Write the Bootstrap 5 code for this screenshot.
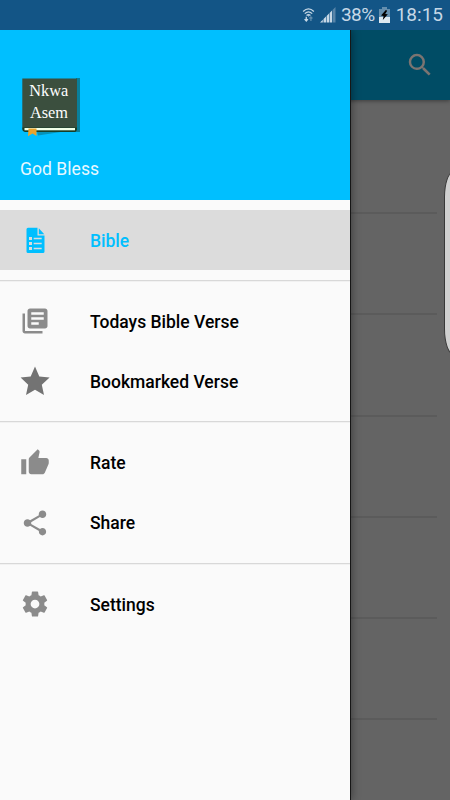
<!DOCTYPE html>
<html lang="en">
<head>
<meta charset="utf-8">
<meta name="viewport" content="width=device-width, initial-scale=1">
<title>Nkwa Asem</title>
<link href="https://cdn.jsdelivr.net/npm/bootstrap@5.3.0/dist/css/bootstrap.min.css" rel="stylesheet">
<style>
body{font-family:Roboto,sans-serif;font-size:17.5px;background:#646464}
.screen{width:450px;height:800px}
.statusbar{height:30px;background:#135586;color:#c6d8e6;font-size:19px;padding-right:7px;z-index:3}
.sig{margin-left:5px}
.pct{margin-left:5px;letter-spacing:-.5px}
.batt{margin-left:4px}
.clock{margin-left:6px}
.appbar{height:70px;background:#004c65;box-shadow:0 1px 4px rgba(0,0,0,.4);padding-right:15px}
.verse-row{height:101.3px;border-bottom:2px solid #5b5b5b;margin-right:13px}
.verse-row:first-child{height:114px}
.drawer{left:0;top:30px;width:350px;height:770px;background:#fafafa;box-shadow:1px 0 0 #161616,2px 0 8px rgba(0,0,0,.38)}
.drawer-head{height:170px;background:#00bfff;padding:48px 20px 0;color:#e9f8ff}
.drawer-name{margin-top:14px;line-height:26px;letter-spacing:.05px}
.drawer-menu{padding-top:10px}
.drawer-item{height:60px;padding-left:20px;gap:40px;font-weight:500;color:#000;text-decoration:none}
.drawer-item span{padding-top:2px}
.drawer-item svg{color:#8b8b8b}
.drawer-item.current{background:#dcdcdc;color:#00bfff}
.drawer-item.current svg{color:#00bfff}
.group-gap{height:21.3px;padding-top:10px}
.group-gap svg{display:block;width:350px;height:3px}
.edge-panel{left:444px;top:171px;width:20px;height:184px;background:#d0d0d0;border:1px solid #393939;border-radius:10px/26px}
</style>
<script src="https://cdn.jsdelivr.net/npm/bootstrap@5.3.0/dist/js/bootstrap.bundle.min.js"></script>
</head>
<body>
<div class="screen position-relative overflow-hidden">
  <header class="statusbar position-relative d-flex align-items-center justify-content-end">
    <svg width="13" height="18" viewBox="0 0 14 18" fill="none" stroke="#c6d8e6" stroke-width="1.4"><path d="M1.200 5.200Q7-.5 12.800 5.200M3 7.500Q7 3.700 11 7.500M4.900 9.600Q7 7.600 9.100 9.600"/><path d="M5.800 9.200h2.400L7 10.800z" fill="#c6d8e6" stroke="none"/><path d="M4.600 11v4.500M2.800 13.500l1.800 2 1.800-2"/><path d="M9.600 15.500v-4.500M8 12.800l1.600-1.800 1.600 1.800" stroke="#5f8cae"/></svg>
    <svg class="sig" width="16" height="16" viewBox="0 0 16 16" fill="#c6d8e6"><path d="M0 15.500L2.800 12.700v2.800zM3.500 15.500v-3.500L6 9.500v6zM6.600 15.500V8.900L9 6.500v9zM9.600 15.500V5.900L12 3.500v12z"/><path d="M12.500 15.500V3L15.500 0v15.500z" fill="#5784a8"/></svg>
    <span class="pct">38%</span>
    <svg class="batt" width="11" height="16" viewBox="0 0 11 16"><path d="M3 0h5v2h3v9H0V2h3z" fill="#658fae"/><path d="M0 10h11v6H0z" fill="#dce8f0"/><path d="M6.800 3L2 8.600l2.600.500L3.800 13l5-5.700-2.600-.4 2-3.200z" fill="#000"/></svg>
    <span class="clock">18:15</span>
  </header>
  <div class="appbar position-relative d-flex align-items-center justify-content-end">
    <svg width="30" height="30" viewBox="0 0 24 24" fill="#7b7471"><path d="M15.500 14h-.79l-.28-.27A6.471 6.471 0 0 0 16 9.500 6.500 6.500 0 1 0 9.500 16c1.610 0 3.090-.59 4.230-1.570l.27.28v.79l5 4.990L20.490 19l-4.990-5zm-6 0C7.010 14 5 11.990 5 9.500S7.010 5 9.500 5 14 7.010 14 9.500 11.990 14 9.500 14z"/></svg>
  </div>
  <main>
    <div class="verse-row"></div><div class="verse-row"></div><div class="verse-row"></div><div class="verse-row"></div><div class="verse-row"></div><div class="verse-row"></div>
  </main>
  <aside class="drawer position-absolute">
    <div class="drawer-head">
      <svg class="d-block" width="62" height="64" viewBox="0 0 62 64">
        <path d="M56 0h4v54h-4z" fill="#087f9a"/>
        <path d="M17 53.500h27l-26 4z" fill="#0593ba"/>
        <path d="M2.300 .500H57V50.500L56 53.500H5Q2.300 53.500 2.300 51z" fill="#3b4f3e"/>
        <path d="M2.500 49.500h54.500v2l-1.500 2.500H5Q2.500 53.500 2.500 51z" fill="#173e28"/>
        <rect x="4.500" y="50" width="50.500" height="2.300" fill="#f0ffe8"/>
        <path d="M8.500 50.500h8v7.500l-4-2.600-4.500 2.800z" fill="#e9a32d"/>
        <g fill="#fff" font-family="Liberation Serif,serif" font-size="17" text-anchor="middle"><text x="28.700" y="18" textLength="39" lengthAdjust="spacingAndGlyphs">Nkwa</text><text x="29" y="40.200" textLength="38" lengthAdjust="spacingAndGlyphs">Asem</text></g>
      </svg>
      <div class="drawer-name">God Bless</div>
    </div>
    <nav class="drawer-menu d-flex flex-column">
      <a class="drawer-item current d-flex align-items-center" href="#"><svg width="30" height="30" viewBox="0.5 0 30 30" fill="currentColor"><path fill-rule="evenodd" d="M8.500 2.700H18V10.500h7v16q0 1.500-1.500 1.500h-15Q7 28 7 26.500V4.200q0-1.500 1.500-1.500zM9.500 12v3h3v-3zM9.500 17v3h3v-3zM9.500 22v3h3v-3zM14.200 12.700v1.600h8v-1.600zM14.200 17.700v1.600h8v-1.600zM14.200 22.700v1.600h8v-1.600z"/><path d="M19.300 3.200l5.500 6h-5.500z"/></svg><span>Bible</span></a>
      <div class="group-gap"><svg viewBox="0 0 350 3"><path d="M0 0h350v1.300H0z" fill="#d8d8d8"/></svg></div>
      <a class="drawer-item d-flex align-items-center" href="#"><svg width="30" height="30" viewBox="0 0 24 24" fill="currentColor"><path d="M4 6H2v14c0 1.100.9 2 2 2h14v-2H4V6zm16-4H8c-1.100 0-2 .9-2 2v12c0 1.100.9 2 2 2h12c1.100 0 2-.9 2-2V4c0-1.100-.9-2-2-2zm-1 9H9V9h10v2zm-4 4H9v-2h6v2zm4-8H9V5h10v2z"/></svg><span>Todays Bible Verse</span></a>
      <a class="drawer-item d-flex align-items-center" href="#"><svg width="30" height="30" viewBox="0 0 30 30" fill="#737373"><path d="M15 .500L19.300 10.600 29.600 11.500 21.800 18.800 24 28.900 15 23.700 6 28.900 8.200 18.800.600 11.500 10.700 10.600z"/></svg><span>Bookmarked Verse</span></a>
      <div class="group-gap"><svg viewBox="0 0 350 3"><path d="M0 0h350v1.300H0z" fill="#d8d8d8"/></svg></div>
      <a class="drawer-item d-flex align-items-center" href="#"><svg width="30" height="30" viewBox="0 0 24 24" fill="currentColor"><path d="M1 21h4V9H1v12zm22-11c0-1.100-.9-2-2-2h-6.310l.95-4.570.03-.32c0-.41-.17-.79-.44-1.060L14.170 1 7.590 7.590C7.220 7.950 7 8.450 7 9v10c0 1.100.9 2 2 2h9c.83 0 1.540-.5 1.840-1.220l3.020-7.050c.09-.23.14-.47.14-.73v-2z"/></svg><span>Rate</span></a>
      <a class="drawer-item d-flex align-items-center" href="#"><svg width="30" height="30" viewBox="0 0 24 24" fill="currentColor"><path d="M18 16.080c-.76 0-1.440.3-1.960.77L8.910 12.700c.05-.23.09-.46.09-.7s-.04-.47-.09-.7l7.050-4.110c.54.5 1.250.81 2.040.81 1.660 0 3-1.340 3-3s-1.340-3-3-3-3 1.340-3 3c0 .24.04.47.09.7L8.040 9.810C7.500 9.310 6.790 9 6 9c-1.660 0-3 1.340-3 3s1.340 3 3 3c.79 0 1.500-.31 2.040-.81l7.120 4.160c-.05.21-.08.43-.08.65 0 1.610 1.310 2.920 2.920 2.920s2.920-1.310 2.920-2.920-1.310-2.920-2.920-2.920z"/></svg><span>Share</span></a>
      <div class="group-gap"><svg viewBox="0 0 350 3"><path d="M0 0h350v1.300H0z" fill="#d8d8d8"/></svg></div>
      <a class="drawer-item d-flex align-items-center" href="#"><svg width="30" height="30" viewBox="0 0 24 24" fill="currentColor"><path d="M19.430 12.980c.04-.32.07-.64.07-.98s-.03-.66-.07-.98l2.110-1.650c.19-.15.24-.42.12-.64l-2-3.460c-.12-.22-.39-.3-.61-.22l-2.490 1c-.52-.4-1.080-.73-1.690-.98l-.38-2.650C14.460 2.180 14.250 2 14 2h-4c-.25 0-.46.18-.49.42l-.38 2.650c-.61.25-1.170.59-1.690.98l-2.490-1c-.23-.09-.49 0-.61.22l-2 3.460c-.13.22-.07.49.12.64l2.110 1.650c-.04.32-.07.65-.07.98s.03.66.07.98l-2.110 1.650c-.19.15-.24.42-.12.64l2 3.460c.12.22.39.3.61.22l2.490-1c.52.4 1.080.73 1.690.98l.38 2.650c.03.24.24.42.49.42h4c.25 0 .46-.18.49-.42l.38-2.650c.61-.25 1.170-.59 1.690-.98l2.490 1c.23.09.49 0 .61-.22l2-3.460c.12-.22.07-.49-.12-.64l-2.110-1.650zM12 15.500c-1.930 0-3.500-1.570-3.500-3.500s1.570-3.500 3.500-3.500 3.500 1.570 3.500 3.500-1.570 3.500-3.500 3.500z"/></svg><span>Settings</span></a>
    </nav>
  </aside>
  <div class="edge-panel position-absolute"></div>
</div>
</body>
</html>
